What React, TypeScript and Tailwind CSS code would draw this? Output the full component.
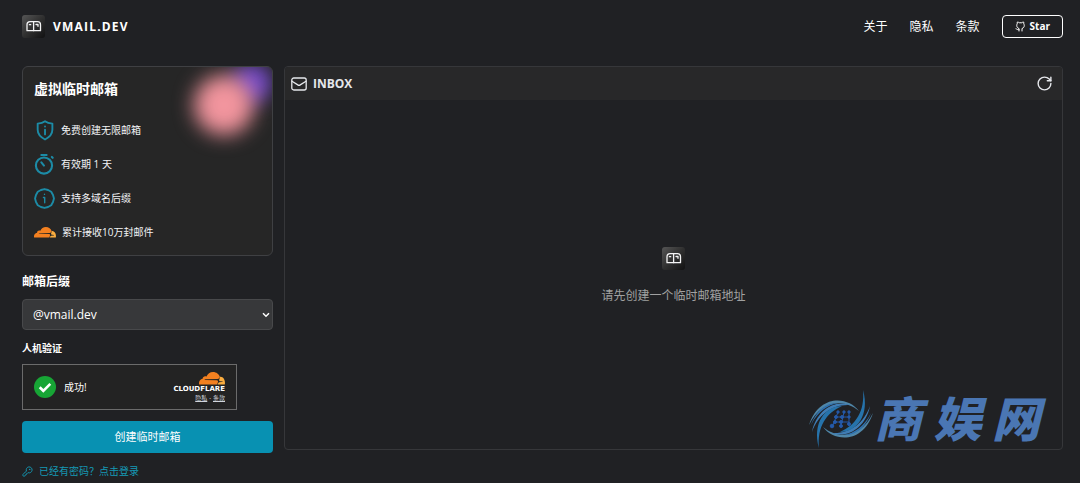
import React, { useState } from 'react';
import { KeyRound, RotateCw } from 'lucide-react';

const features = [
  { icon: 'shield', label: '免费创建无限邮箱' },
  { icon: 'timer', label: '有效期 1 天' },
  { icon: 'badge', label: '支持多域名后缀' },
  { icon: 'cloud', label: '累计接收10万封邮件' },
];

const Logo: React.FC = () => (
  <svg width="23" height="23" viewBox="0 0 23 23" aria-hidden="true">
    <defs>
      <linearGradient id="logo-bg" x1="0" y1="0" x2="1" y2="1">
        <stop offset="0" stopColor="#565656" />
        <stop offset="0.5" stopColor="#303030" />
        <stop offset="1" stopColor="#111112" />
      </linearGradient>
    </defs>
    <rect width="23" height="23" rx="3" fill="url(#logo-bg)" />
    <g fill="none" stroke="#f4f4f5" strokeWidth="1.3" strokeLinejoin="round" strokeLinecap="round">
      <path d="M8 6.7h7.5a3 3 0 0 1 3 3v6H5v-6a3 3 0 0 1 3-3Z" />
      <path d="M11.6 7v8.7M7.4 9.7h1.3M14 9.5h2v1.8" />
    </g>
  </svg>
);

const Cloud: React.FC<{ className?: string }> = ({ className }) => (
  <svg viewBox="0 0 26 13" className={className} aria-hidden="true">
    <path
      d="M18.2 12.5 19 9.7c.2-.8-.3-1.3-1.1-1.4L5.4 8c.2-.5.6-.7 1.1-.7l11.9-.2c1.2-.1 2.1-.9 2.5-2C20.2 2.2 17.3 0 14 0c-3 0-5.5 1.9-6.5 4.5-1.6-1-3.8.1-3.9 2.2C1.5 6.9 0 8.8 0 11l.1 1.5h18.1Z"
      fill="#f38020"
    />
    <path
      d="M21.7 4.7h-.6l-.9 3.1c-.2.8.3 1.3 1.1 1.4l2.5.2c-.1.5-.6.7-1.1.7l-2.4.2c-.8.2-1.3 1-1.5 2.2h7c.8-4.2-1.3-7.7-4.1-7.8Z"
      fill="#faad3f"
    />
  </svg>
);

const FeatureIcon: React.FC<{ name: string }> = ({ name }) => {
  if (name === 'cloud') {
    return <Cloud className="h-[11px] w-[22px]" />;
  }
  return (
    <svg
      width="21"
      height="21"
      viewBox="0 0 20 20"
      fill="none"
      stroke="#1c8ba6"
      strokeWidth="1.8"
      strokeLinecap="round"
      strokeLinejoin="round"
      aria-hidden="true"
    >
      {name === 'shield' && (
        <>
          <path d="M10.5 1.2c2.2 1.6 4.5 2 7 2.2v6c0 4.2-2.7 7-7 9.200-4.300-2.200-7-5-7-9.200v-6c2.500-.2 4.800-.6 7-2.200Z" />
          <path d="M10.500 9.200v4.500M10.500 6.200v.1" />
        </>
      )}
      {name === 'timer' && (
        <>
          <circle cx="9.500" cy="11" r="7.700" strokeWidth="2" />
          <path d="M7 1h5M7 8l2.500 3M17 2.800l.8.800" strokeWidth="2" />
        </>
      )}
      {name === 'badge' && (
        <>
          <path d="M10 1l3.400.9 3 1.700 1.700 3L19 10l-.9 3.400-1.700 3-3 1.700L10 19l-3.400-.9-3-1.700-1.700-3L1 10l.9-3.400 1.700-3 3-1.700Z" />
          <path d="M9 9h1.200v5M10 6v.1" strokeWidth="1.300" />
        </>
      )}
    </svg>
  );
};

const FeatureCard: React.FC = () => (
  <section className="relative overflow-hidden rounded-md border border-[#3f4043] bg-[#262626] px-[11px] pt-3 pb-[6px]">
    {/* Glow */}
    <div className="absolute -top-1 right-0 size-10 rounded-full bg-[#7249c4] blur-[9px]" />
    <div className="absolute top-2 right-[18px] size-[60px] rounded-full bg-[#f2959e] blur-[10px]" />

    <h2 className="relative text-sm leading-5 font-bold text-white">虚拟临时邮箱</h2>
    <ul className="relative mt-[14px]">
      {features.map((feature) => (
        <li key={feature.icon} className="flex h-[34px] items-center gap-[6px] text-[10px] text-gray-100">
          <FeatureIcon name={feature.icon} />
          {feature.label}
        </li>
      ))}
    </ul>
  </section>
);

const Turnstile: React.FC = () => (
  <div className="mt-[6px] flex h-[46px] w-[215px] items-center border border-[#6b6b6b] bg-[#232323] px-[11px]">
    <svg width="22" height="22" viewBox="0 0 22 22" aria-hidden="true">
      <circle cx="11" cy="11" r="11" fill="#17a535" />
      <path d="M5.7 11.3l3.6 3.5 7-7" fill="none" stroke="#fff" strokeWidth="2.6" />
    </svg>
    <span className="ml-2 text-[10px] text-white">成功!</span>
    <div className="ml-auto flex flex-col items-end">
      <Cloud className="h-[13px] w-[26px]" />
      <span className="font-['DejaVu_Sans',sans-serif] text-[7px] leading-[8px] font-bold text-white">
        CLOUDFLARE
      </span>
      <span className="mt-px flex gap-[2px] text-[6px] leading-[9px] text-gray-300">
        <a href="#privacy" className="underline">隐私</a>
        <span className="font-bold">·</span>
        <a href="#terms" className="underline">条款</a>
      </span>
    </div>
  </div>
);

// One half of the swirl, the other half is the same shape turned by 180 degrees
const SwirlHalf: React.FC = () => (
  <>
    <path d="M51 22C40 7 11 5 1 36 12 13 34 8 51 22Z" fill="#4f86a8" />
    <path d="M42 16C26 10 8 22 4 43 10 26 24 15 42 16Z" fill="#3f7cb4" />
    <path d="M30 14C18 13 8 22 3 36 10 22 20 16 30 14Z" fill="#2f72b0" />
    <path d="M34 17C17 17 4 34 11 59 9 38 18 24 34 17Z" fill="#2673ab" />
  </>
);

const Watermark: React.FC = () => (
  <div className="pointer-events-none absolute right-[40px] bottom-[34px] flex items-center text-[#4a76b3]">
    <svg width="66" height="60" viewBox="0 0 66 60" aria-hidden="true">
      <SwirlHalf />
      <g transform="rotate(180 33 30)">
        <SwirlHalf />
      </g>
      <g fill="#2459a8" stroke="#2459a8">
        <path fill="none" d="M30 23l-5 13M36 23l-3 14M41 23v14M28 28h13M25 33h16" />
        <circle cx="30" cy="23" r="1.2" />
        <circle cx="36" cy="23" r="1.2" />
        <circle cx="41" cy="23" r="1.2" />
        <circle cx="28" cy="28" r="1.5" />
        <circle cx="34" cy="28" r="1.5" />
        <circle cx="41" cy="28" r="1.2" />
        <circle cx="27" cy="33" r="1.5" />
        <circle cx="33" cy="33" r="1.5" />
        <circle cx="41" cy="35" r="1.5" />
        <circle cx="24" cy="37" r="1.8" />
        <circle cx="33" cy="37" r="1.5" />
      </g>
    </svg>
    <div className="flex gap-[11px] text-[48px] leading-[60px] font-black italic">
      <span>商</span>
      <span>娱</span>
      <span>网</span>
    </div>
  </div>
);

const App: React.FC = () => {
  const [domain, setDomain] = useState('@vmail.dev');

  return (
    <div className="relative min-h-screen bg-[#202124] pr-[17px] pl-[22px] font-['Open_Sans','Noto_Sans_CJK_SC',sans-serif] text-white">
      {/* Header */}
      <header className="flex items-center justify-between pt-[15px]">
        <a href="#home" className="flex items-center gap-2 text-xs font-bold tracking-widest">
          <Logo />
          VMAIL.DEV
        </a>
        <nav className="flex items-center gap-[22px] text-xs">
          <a href="#about">关于</a>
          <a href="#privacy">隐私</a>
          <a href="#terms">条款</a>
          <a
            href="#star"
            className="flex h-[23px] items-center gap-1 rounded border border-white px-3 text-[10px] font-bold"
          >
            <svg
              width="11"
              height="11"
              viewBox="0 0 22 22"
              fill="none"
              stroke="currentColor"
              strokeWidth="2"
              strokeLinecap="round"
              strokeLinejoin="round"
              aria-hidden="true"
            >
              <path d="M8 20v-5C5 14 3.500 12 3.500 9c0-1.500.4-2.500 1-3.300C4.200 4.300 4.300 3 4.800 2c1.400 0 2.600.7 3.600 1.500h5.200C14.600 2.700 15.800 2 17.200 2c.5 1 .6 2.300.3 3.700.6.800 1 1.800 1 3.300 0 3-1.500 5-4.500 6v5M8 17.500c-3 .8-4-1.500-6-2" />
            </svg>
            Star
          </a>
        </nav>
      </header>

      <main className="mt-7 flex items-start gap-[11px]">
        {/* Mailbox form */}
        <div className="w-[251px] shrink-0">
          <FeatureCard />
          <form onSubmit={(e) => e.preventDefault()}>
            <label htmlFor="domain" className="mt-4 block text-xs leading-5 font-bold">
              邮箱后缀
            </label>
            <div className="relative mt-[7px]">
              <select
                id="domain"
                value={domain}
                onChange={(e) => setDomain(e.target.value)}
                className="block h-[31px] w-full appearance-none rounded border border-[#48494b] bg-[#37383a] px-[10px] text-xs text-white"
              >
                <option>@vmail.dev</option>
              </select>
              <svg
                className="pointer-events-none absolute top-3 right-[3px]"
                width="8"
                height="8"
                viewBox="0 0 8 8"
                fill="none"
                stroke="#fff"
                strokeWidth="1.5"
                aria-hidden="true"
              >
                <path d="M1 2.2l3 3 3-3" />
              </svg>
            </div>
            <p className="mt-2 text-[10px] leading-5 font-bold">人机验证</p>
            <Turnstile />
            <button type="submit" className="mt-[11px] h-8 w-full rounded bg-[#0891b2] text-[11px] text-white">
              创建临时邮箱
            </button>
          </form>
          <a href="#login" className="mt-2 flex items-center gap-[6px] text-[10px] leading-5 text-[#1599b5]">
            <KeyRound size={11} />
            已经有密码？点击登录
          </a>
        </div>

        {/* Inbox */}
        <section className="min-w-0 flex-1 overflow-hidden rounded border border-[#36373a]">
          <div className="flex h-[33px] items-center gap-[6px] bg-[#282829] px-[6px] text-gray-200">
            <svg
              width="16"
              height="14"
              viewBox="0 0 16 14"
              fill="none"
              stroke="currentColor"
              strokeWidth="1.3"
              strokeLinecap="round"
              strokeLinejoin="round"
              aria-hidden="true"
            >
              <rect x=".8" y="1" width="14.4" height="12" rx="2" />
              <path d="M1 4.3l5.8 3.600a2.200 2.200 0 0 0 2.400 0L15 4.300" />
            </svg>
            <h2 className="text-xs font-bold">INBOX</h2>
            <button type="button" aria-label="刷新" className="ml-auto pr-[3px]">
              <RotateCw size={17} />
            </button>
          </div>
          <div className="flex min-h-[349px] flex-col items-center justify-center gap-4 pt-1">
            <Logo />
            <p className="text-xs leading-5 text-neutral-400">请先创建一个临时邮箱地址</p>
          </div>
        </section>
      </main>

      <Watermark />
    </div>
  );
};

export default App;
